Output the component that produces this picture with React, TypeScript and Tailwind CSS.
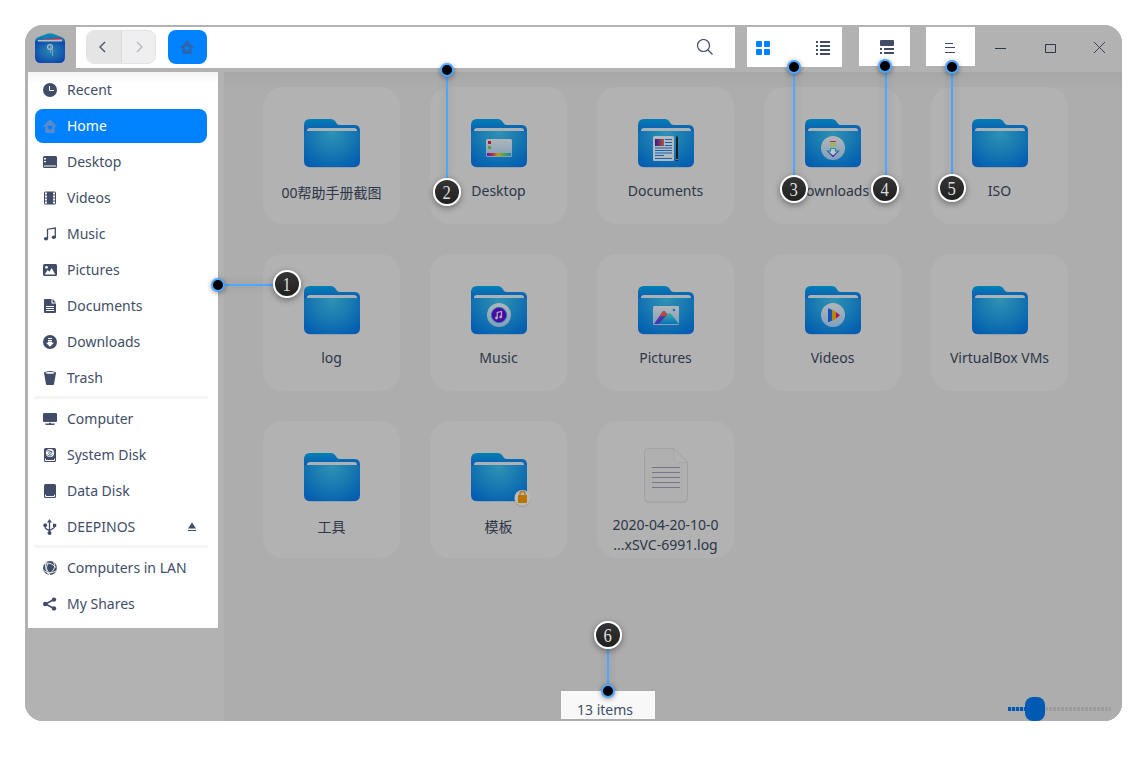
import React from "react";

const INK = "#414d68";

function Glyph({ name }: { name: string }) {
  const c = "size-[14px] shrink-0 overflow-visible";
  const p = { viewBox: "0 0 14 14", className: c, fill: INK };
  switch (name) {
    case "recent":
      return <svg {...p}><circle cx="7" cy="7" r="7" /><path d="M6.5 3v4.5H11" stroke="#fff" fill="none" /></svg>;
    case "home":
      return (
        <svg {...p} fill="#5b8cc8">
          <path d="M7 0.300 14.200 7.700H11.700V13a1 1 0 0 1-1 1H3.300a1 1 0 0 1-1-1V7.700H-.2z" />
          <path d="M7 11 4.600 8.700C3.600 7.300 5.700 5.600 7 7.200c1.300-1.600 3.400.1 2.400 1.500z" fill="#0081ff" />
        </svg>
      );
    case "desktop":
      return <svg {...p}><rect y="1" width="14" height="12" rx="1.500" /><path d="M1 10.500h12v1H1zM1 3h2v1.500H1zM1 6h2v1.300H1z" fill="#fff" /></svg>;
    case "videos":
      return (
        <svg {...p}>
          <rect x="1" y="0.500" width="12" height="13" rx="1.500" />
          <path d="M3 1.500v11M11 1.500v11" stroke="#fff" strokeWidth="2" strokeDasharray="2 1" />
          <path d="M4.300 1v12M9.700 1v12" stroke="#414d68" strokeWidth="0.600" />
        </svg>
      );
    case "music":
      return <svg {...p}><path d="M4.500 11.500V2.200L12.300 1v9" fill="none" stroke={INK} strokeWidth="1.300" /><ellipse cx="3" cy="11.800" rx="2.100" ry="1.800" /><ellipse cx="10.800" cy="10.200" rx="2.100" ry="1.800" /></svg>;
    case "pictures":
      return <svg {...p}><rect y="1" width="14" height="12" rx="1.500" /><circle cx="3.500" cy="4.300" r="1.400" fill="#fff" /><path d="M1.700 11.500 4.500 7l2 1.700L8.700 5l3.600 6.500z" fill="#fff" /></svg>;
    case "documents":
      return <svg {...p}><path d="M2 0h6.500v4.500H13V13a1 1 0 0 1-1 1H2a1 1 0 0 1-1-1V1a1 1 0 0 1 1-1zM9.500 0 13 3.500H9.500z" /><path d="M3 7.500h8M3 9.500h8M3 11.500h8" stroke="#fff" /></svg>;
    case "downloads":
      return <svg {...p}><circle cx="7" cy="7" r="7" /><path d="M5 3.500h4M5 5.500h4" stroke="#fff" /><path d="M5 6.500h4v1.300h2L7 11.800 3 7.800h2z" fill="#fff" /></svg>;
    case "trash":
      return <svg {...p}><path d="M1 1.800h12L11 13.200q-.2.800-1 .8H4q-.8 0-1-.8z" /><ellipse cx="7" cy="1.900" rx="6" ry="1.800" /><ellipse cx="7" cy="1.900" rx="4.500" ry=".8" fill="#fff" /></svg>;
    case "computer":
      return <svg {...p}><rect y="1" width="14" height="8" rx="1.200" /><path d="M0 8h14v1.200q0 .8-.8.8H.8Q0 10 0 9.200zM6 10.500h2V11h3.500v2h-9v-2H6z" /><path d="M0 10.400h14M2.500 11.600h3.500M8 11.600h3.500" stroke="#fff" strokeWidth=".6" /></svg>;
    case "system":
      return (
        <svg {...p}>
          <rect x="1" width="12" height="14" rx="1.500" />
          <circle cx="7" cy="5" r="4.100" fill="#fff" />
          <path d="M4 3.300c3-1.500 5 .3 4 2.200-1 1.700-3 .8-2-1 .8-1.300 3-1.800 4 0M4 6.500c1.500 2 4 1.700 5.300 0" stroke={INK} fill="none" strokeWidth=".9" />
          <path d="M2.500 10.700v1.800h9v-1.800" stroke="#fff" fill="none" />
        </svg>
      );
    case "data":
      return <svg {...p}><rect x="1" width="12" height="14" rx="1.500" /><path d="M2.500 10.700v1.800h9v-1.800" stroke="#fff" fill="none" /></svg>;
    case "usb":
      return (
        <svg {...p}>
          <path d="M6.500 1v13M2.200 5v2.500q0 .8 1 1.300l3.300 1.700 3.500-2q1.500-.8 1.500-2V5" fill="none" stroke={INK} strokeWidth="1.300" />
          <path d="M6.500-1 9 2.500H4z" /><circle cx="6.500" cy="13" r="2" /><circle cx="2.200" cy="5.200" r="1.900" /><path d="M10 3.800h3.200V7H10z" />
        </svg>
      );
    case "lan":
      return (
        <svg {...p}>
          <circle cx="7" cy="7" r="7" />
          <g fill="none" stroke="#fff" strokeWidth=".9">
            <path d="M1.300 3.200C5 1 9 2.300 13.500 7M3.300.8C1.500 6 3 10.500 7 14M10.700.8C13 6 11 11 4 13.200M.3 8.800C4 13 9 12.500 13.800 9.500M5 3C2.500 6 3.500 9 5.500 10.500" />
          </g>
        </svg>
      );
    default:
      return <svg {...p}><path d="M11 2.500 2.500 7l8.500 4.500" fill="none" stroke={INK} strokeWidth="1.600" /><circle cx="11" cy="2.600" r="2.200" /><circle cx="2.300" cy="7" r="2.300" /><circle cx="11" cy="11.400" r="2.200" /></svg>;
  }
}

function Badge({ kind }: { kind: string }) {
  switch (kind) {
    case "desktop":
      return (
        <g>
          <rect x="19" y="27" width="26" height="18" rx="1.500" fill="url(#paper)" />
          <rect x="21" y="29" width="3" height="3" fill="#ad1735" /><rect x="21" y="34" width="3" height="3" fill="#5f9c28" />
          <rect x="20" y="41" width="24" height="3" fill="url(#rainbow)" />
        </g>
      );
    case "documents":
      return (
        <g>
          <rect x="19" y="24" width="21" height="25" rx="1.500" fill="#b0b8c2" />
          <rect x="21" y="27" width="9" height="7" fill="url(#photo)" />
          <path d="M31 27.500h7M31 30.500h7M31 33.500h7M21 36h17M21 38.500h17M21 41h17M21 43.500h9M21 46.500h17" stroke="#1965ae" />
          <path d="M42 26l1-3 1 3v23h-2z" fill="#1d1d1d" /><path d="M42 47.500h2" stroke="#b96b52" />
        </g>
      );
    case "downloads":
      return (
        <g>
          <circle cx="32" cy="36" r="12" fill="url(#paper)" />
          <path d="M29 29.500h6" stroke="#b2294c" />
          <path d="M29.500 31.500h5v2h-5z" fill="none" stroke="#a2b32b" />
          <path d="M29.500 36.500h5v2.500h3L32 44.500 26.500 39h3z" fill="#bdc6cd" stroke="url(#arrow)" strokeWidth="1.100" />
        </g>
      );
    case "music":
      return (
        <g>
          <circle cx="32" cy="36" r="12" fill="url(#paper)" />
          <circle cx="32" cy="36" r="7.600" fill="#4b09a5" stroke="#1a72ac" />
          <path d="M30.200 39.500v-6l4.300-1v6" fill="none" stroke="#b2b2b2" strokeWidth="1.200" /><circle cx="29.500" cy="39" r="1.400" fill="#b2b2b2" /><circle cx="33.700" cy="38" r="1.400" fill="#b2b2b2" />
        </g>
      );
    case "pictures":
      return (
        <g>
          <rect x="19" y="27" width="26" height="19" rx="1.200" fill="url(#paper)" />
          <path d="M20 45 28.800 32.500q1.200-1 2.200 0l4 5L29 45z" fill="#4a35ad" />
          <path d="M25.500 37.300 28.800 32.500q1.200-1 2.200 0l3.300 4.800z" fill="#bb4a3d" />
          <path d="M24.500 45 34.500 34.500q1.200-1 2.300 0L45 45z" fill="url(#hill)" /><circle cx="40" cy="31" r="1.200" fill="#1770a8" />
        </g>
      );
    case "videos":
      return (
        <g>
          <circle cx="32" cy="36" r="12" fill="url(#paper)" />
          <path d="M27 30q0-1 1-.6l3.200 1.600v10.500L28 43q-1 .3-1-.8z" fill="#1553b4" /><path d="M31 30.800 35 33v6.700L31 42z" fill="#b8860b" /><path d="M35 33l4 3.300L35 39.800z" fill="#af1559" />
        </g>
      );
    case "lock":
      return (
        <g>
          <circle cx="55.500" cy="53" r="8" fill="#999" /><circle cx="55.500" cy="52" r="8" fill="#b9b9b9" />
          <path d="M53 50v-2q0-2.500 2.500-2.500T58 48v2" fill="none" stroke="#b87810" strokeWidth="1.300" /><rect x="51" y="49" width="9" height="8" rx=".8" fill="#b87400" />
        </g>
      );
    default:
      return null;
  }
}

function FolderIcon({ kind }: { kind: string }) {
  return (
    <svg viewBox="0 0 64 64" className="ml-px size-16 shrink-0">
      <rect x="5" y="20" width="54" height="36" rx="6" fill="#788aa5" opacity=".45" />
      <path d="M4 20v-7q0-6 6-6h20.500q4 0 5.500 3.500Q37.300 13 40 13h15q5 0 5 6v1z" fill="url(#back)" />
      <path d="M7 19v-.5q0-2.500 3-2.500h44q3 0 3 2.500v.5z" fill="#a9b2b6" />
      <path d="M4 19h56v30q0 6-6 6H10q-6 0-6-6z" fill="url(#front)" />
      <Badge kind={kind} />
    </svg>
  );
}

function FileIcon() {
  return (
    <svg viewBox="0 0 64 64" className="ml-px size-16 shrink-0">
      <path d="M15 3h25l14 14v35q0 5-5 5H15q-5 0-5-5V8q0-5 5-5z" fill="#a7a7a7" />
      <path d="M15 2.500h25L53.500 16v35q0 5-5 5H15.500q-5 0-5-5V7q0-4.500 4.500-4.500z" fill="#b0b0b0" stroke="#a2a2a2" />
      <path d="M40 3v9q0 4.500 4.500 4.500H53" fill="#b2b2b2" stroke="#a7a7a7" />
      <path d="M18 21.500h28M18 26.500h28M18 31.500h28M18 36.500h28M18 41.500h28" stroke="#75758c" />
    </svg>
  );
}

function Defs() {
  return (
    <svg className="absolute size-0">
      <defs>
        <radialGradient id="front" gradientUnits="userSpaceOnUse" cx="32" cy="21" r="42">
          <stop offset="0" stopColor="#2e91b4" /><stop offset=".45" stopColor="#1a7bb1" /><stop offset=".85" stopColor="#0663b1" /><stop offset="1" stopColor="#0459b0" />
        </radialGradient>
        <linearGradient id="back" x1="0" y1="0" x2="0" y2="1"><stop offset="0" stopColor="#0080b4" /><stop offset="1" stopColor="#1058b2" /></linearGradient>
        <linearGradient id="paper" x1="0" y1="0" x2="0" y2="1"><stop offset="0" stopColor="#b2b5b9" /><stop offset="1" stopColor="#7fa0bd" /></linearGradient>
        <linearGradient id="rainbow"><stop offset="0" stopColor="#6315a8" /><stop offset=".25" stopColor="#b03545" /><stop offset=".45" stopColor="#b6a018" /><stop offset=".7" stopColor="#58a33d" /><stop offset="1" stopColor="#1684b5" /></linearGradient>
        <linearGradient id="photo"><stop offset="0" stopColor="#3c178c" /><stop offset="1" stopColor="#a8583f" /></linearGradient>
        <linearGradient id="arrow" x1="0" y1="0" x2="0" y2="1"><stop offset="0" stopColor="#1c9c98" /><stop offset="1" stopColor="#4a16b4" /></linearGradient>
        <linearGradient id="hill" x1="0" y1="0" x2="0" y2="1"><stop offset="0" stopColor="#37b0a8" /><stop offset="1" stopColor="#0c72b4" /></linearGradient>
        <linearGradient id="flap" x1="0" y1="0" x2="0" y2="1"><stop offset="0" stopColor="#0c8fb8" /><stop offset="1" stopColor="#0b5ca8" /></linearGradient>
        <radialGradient id="logo" cx=".5" cy=".45" r=".65"><stop offset="0" stopColor="#2a86ae" /><stop offset=".6" stopColor="#1660b0" /><stop offset="1" stopColor="#0c41ae" /></radialGradient>
      </defs>
    </svg>
  );
}

const groups = [
  [["recent", "Recent"], ["home", "Home"], ["desktop", "Desktop"], ["videos", "Videos"], ["music", "Music"], ["pictures", "Pictures"], ["documents", "Documents"], ["downloads", "Downloads"], ["trash", "Trash"]],
  [["computer", "Computer"], ["system", "System Disk"], ["data", "Data Disk"], ["usb", "DEEPINOS"]],
  [["lan", "Computers in LAN"], ["shares", "My Shares"]],
];

const files = [
  { label: "00帮助手册截图", kind: "plain", cjk: true },
  { label: "Desktop", kind: "desktop" },
  { label: "Documents", kind: "documents" },
  { label: "Downloads", kind: "downloads" },
  { label: "ISO", kind: "plain" },
  { label: "log", kind: "plain" },
  { label: "Music", kind: "music" },
  { label: "Pictures", kind: "pictures" },
  { label: "Videos", kind: "videos" },
  { label: "VirtualBox VMs", kind: "plain" },
  { label: "工具", kind: "plain", cjk: true },
  { label: "模板", kind: "lock", cjk: true },
  { label: "2020-04-20-10-0\n...xSVC-6991.log", kind: "file" },
];

function Sidebar() {
  return (
    <aside className="w-[199px] shrink-0 bg-[#b2b2b2] pl-[3px]">
      <nav className="h-[556px] w-[190px] bg-white bg-[linear-gradient(#f4f4f4,#fff_12px)]">
        {groups.map((group, g) => (
          <React.Fragment key={g}>
            {g > 0 && <div className="ml-1.5 mb-0.5 h-[3px] w-[174px] bg-[#f5f5f5]" />}
            {group.map(([icon, label]) => (
              <div key={label} className="flex h-9 items-center pl-[7px]">
                <div className={icon === "home" ? "flex h-[34px] w-[172px] items-center gap-2.5 rounded-lg bg-[#0081ff] px-2 text-white" : "flex h-[34px] w-[172px] items-center gap-2.5 px-2 text-[#414d68]"}>
                  <Glyph name={icon} />
                  <span className="flex-1 whitespace-nowrap">{label}</span>
                  {icon === "usb" && (
                    <svg viewBox="0 0 8 10" className="mr-[3px] h-[10px] w-2" fill={INK}><path d="M4 0.500 8 6.500H0zM0 8h8v1H0z" /></svg>
                  )}
                </div>
              </div>
            ))}
          </React.Fragment>
        ))}
      </nav>
    </aside>
  );
}

function Header() {
  return (
    <header className="flex h-[47px] shrink-0 items-start bg-[#b2b2b2] pt-0.5">
      <svg viewBox="0 0 30 31" className="ml-2.5 mt-[5px] h-[31px] w-[30px]">
        <path d="M0 9q0-2.500 2.500-3.500L12 1.800q3-1.200 6 0l9.500 3.700Q30 6.500 30 9v6H0z" fill="url(#flap)" />
        <path d="M3 8 25.500 5.800q1.500 0 1.500 1.500V10H3z" fill="#b52d53" /><path d="M3 8l24-.4V10H3z" fill="#bdbdbd" />
        <path d="M0 9.500h30V25q0 6-6 6H6q-6 0-6-6z" fill="url(#logo)" />
        <circle cx="15" cy="15" r="2.400" fill="none" stroke="#b0bcc5" strokeWidth="1.300" /><path d="M15.500 14v7M17.500 17v7" stroke="#6ba8c0" strokeWidth="1" />
      </svg>
      <div className="ml-[11px] flex h-[41px] w-[659px] items-start bg-white pl-[10px] pt-[3px]">
        <div className="flex h-[34px] w-[70px] overflow-hidden rounded-lg border border-[#e3e3e3] bg-[#efefef]">
          <div className="flex w-[35px] items-center justify-center border-r border-[#dbdbdb] bg-[#e5e5e5]">
            <svg viewBox="0 0 7 12" className="mr-[3px] h-3 w-[7px]" fill="none" stroke={INK} strokeWidth="1.300"><path d="M6 1 1 6l5 5" /></svg>
          </div>
          <div className="flex flex-1 items-center justify-center">
            <svg viewBox="0 0 7 12" className="ml-0.5 h-3 w-[7px]" fill="none" stroke="#b4b7bf" strokeWidth="1.300"><path d="M1 1l5 5-5 5" /></svg>
          </div>
        </div>
        <div className="ml-3 flex h-[34px] w-[39px] items-center justify-center rounded-lg bg-[#0081ff] pr-px">
          <svg viewBox="0 0 14 14" className="size-[14px] overflow-visible" fill="#2966ae">
            <path d="M7 0.300 14.200 7.700H11.700V13a1 1 0 0 1-1 1H3.300a1 1 0 0 1-1-1V7.700H-.2z" />
            <path d="M7 11 4.600 8.700C3.600 7.300 5.700 5.600 7 7.200c1.300-1.600 3.400.1 2.400 1.500z" fill="#0081ff" />
          </svg>
        </div>
        <svg viewBox="0 0 16 16" className="ml-auto mr-[22px] mt-[9px] size-4" fill="none" stroke={INK} strokeWidth="1.200"><circle cx="6.500" cy="6.500" r="6" /><path d="m11 11 4.500 4.500" /></svg>
      </div>
      <div className="ml-3 flex h-10 w-[95px] pl-[9px] pt-[14px] bg-white">
        <svg viewBox="0 0 14 14" className="size-[14px]" fill="#0081ff"><rect width="6" height="6" rx="1" /><rect x="8" width="6" height="6" rx="1" /><rect y="8" width="6" height="6" rx="1" /><rect x="8" y="8" width="6" height="6" rx="1" /></svg>
        <svg viewBox="0 0 14 14" className="ml-[46px] size-[14px]" fill={INK}><path d="M0 0h2v2H0zM4 0h10v2H4zM0 4h2v2H0zM4 4h10v2H4zM0 8h2v2H0zM4 8h10v2H4zM0 12h2v2H0zM4 12h10v2H4z" /></svg>
      </div>
      <div className="ml-[17px] flex h-[39px] w-[51px] bg-white pl-[21px] pt-[13px]">
        <svg viewBox="0 0 14 14" className="size-[14px]" fill={INK}><rect width="14" height="6" rx="1" /><path d="M0 8h2v2H0zM4 8h10v2H4zM0 12h2v2H0zM4 12h10v2H4z" /></svg>
      </div>
      <div className="ml-4 flex h-[39px] w-[49px] bg-white pl-[19px] pt-4">
        <svg viewBox="0 0 10 10" className="size-[10px]" fill={INK}><path d="M0 0h8v1H0zM0 4h10v1H0zM0 9h10v1H0z" /></svg>
      </div>
      <div className="flex pt-[14px] pl-5">
        <svg viewBox="0 0 111 13" className="h-[13px] w-[111px]" fill="none" stroke="#2d3648"><path d="M0 7.500h11" /><path d="M50.500 3.500h10v8h-10z" /><path d="m99 1 11 11m0-11-11 11" strokeWidth=".9" /></svg>
      </div>
    </header>
  );
}

function Content() {
  return (
    <main className="flex flex-1 flex-col bg-[#adadad] bg-[linear-gradient(#a7a7a7,#adadad_18px)]">
      <div className="grid grid-cols-[repeat(5,137px)] gap-[30px] pl-[39px] pt-[15px]">
        {files.map((f) => (
          <div key={f.label} className="flex h-[137px] flex-col items-center rounded-[20px] bg-[#b2b2b2] pt-[25px] text-[#2d3648]">
            {f.kind === "file" ? <FileIcon /> : <FolderIcon kind={f.kind} />}
            <div className={f.cjk ? "mt-[7px] whitespace-pre text-center" : "mt-[5px] whitespace-pre text-center"}>{f.label}</div>
          </div>
        ))}
      </div>
      <footer className="mt-auto flex h-[30px] items-start pl-[337px]">
        <div className="flex h-7 w-[94px] items-center bg-[#f8f8f8] pl-4 pt-[9px] text-[#414d68]">13 items</div>
        <div className="ml-[353px] mt-1.5 flex h-6 items-center">
          <div className="h-[4px] w-[17px] bg-[repeating-linear-gradient(90deg,#0059b2_0_3px,#8299b0_3px_4px)]" />
          <div className="h-6 w-5 rounded-lg bg-[#0059b2]" />
          <div className="h-[4px] w-[66px] bg-[repeating-linear-gradient(90deg,#9c9c9c_0_3px,#adadad_3px_4px)]" />
        </div>
      </footer>
    </main>
  );
}

const ball = "absolute flex size-7 items-center justify-center rounded-full border-2 border-white bg-[linear-gradient(#353535,#202020)] font-['Liberation_Serif',serif] text-[19px] leading-none text-[#dedede] shadow-[0_2px_6px_rgba(0,0,0,0.4)]";
const dot = "absolute size-[14px] rounded-full border-2 border-[#4da6ff] bg-black shadow-[0_1px_5px_rgba(0,0,0,0.4)]";
const line = "absolute bg-[#4da6ff] shadow-[0_0_8px_rgba(0,0,0,0.2)]";

const callouts = [
  { n: 1, line: "left-[218px] top-[284px] h-0.5 w-[60px]", dot: "left-[211px] top-[278px]", ball: "left-[273px] top-[270px]" },
  { n: 2, line: "left-[446px] top-[70px] h-[112px] w-0.5", dot: "left-[440px] top-[63px]", ball: "left-[433px] top-[178px]" },
  { n: 3, line: "left-[793px] top-[67px] h-[112px] w-0.5", dot: "left-[787px] top-[60px]", ball: "left-[780px] top-[175px]" },
  { n: 4, line: "left-[885px] top-[66px] h-[112px] w-0.5", dot: "left-[878px] top-[59px]", ball: "left-[871px] top-[175px]" },
  { n: 5, line: "left-[951px] top-[67px] h-[112px] w-0.5", dot: "left-[945px] top-[60px]", ball: "left-[938px] top-[174px]" },
  { n: 6, line: "left-[607px] top-[645px] h-[46px] w-0.5", dot: "left-[601px] top-[684px]", ball: "left-[594px] top-[621px]" },
];

export default function App() {
  return (
    <div className="relative h-[760px] w-[1148px] overflow-hidden bg-white p-[25px] font-['Noto_Sans','Noto_Sans_CJK_SC',sans-serif] text-sm leading-5">
      <Defs />
      <div className="flex h-[696px] w-[1097px] flex-col overflow-hidden rounded-[18px] bg-[#b2b2b2]">
        <Header />
        <div className="flex flex-1">
          <Sidebar />
          <Content />
        </div>
      </div>
      {callouts.map((c) => (
        <React.Fragment key={c.n}>
          <div className={`${line} ${c.line}`} />
          <div className={`${dot} ${c.dot}`} />
          <div className={`${ball} ${c.ball}`}><span className="mr-px inline-block scale-x-[0.88]">{c.n}</span></div>
        </React.Fragment>
      ))}
    </div>
  );
}
